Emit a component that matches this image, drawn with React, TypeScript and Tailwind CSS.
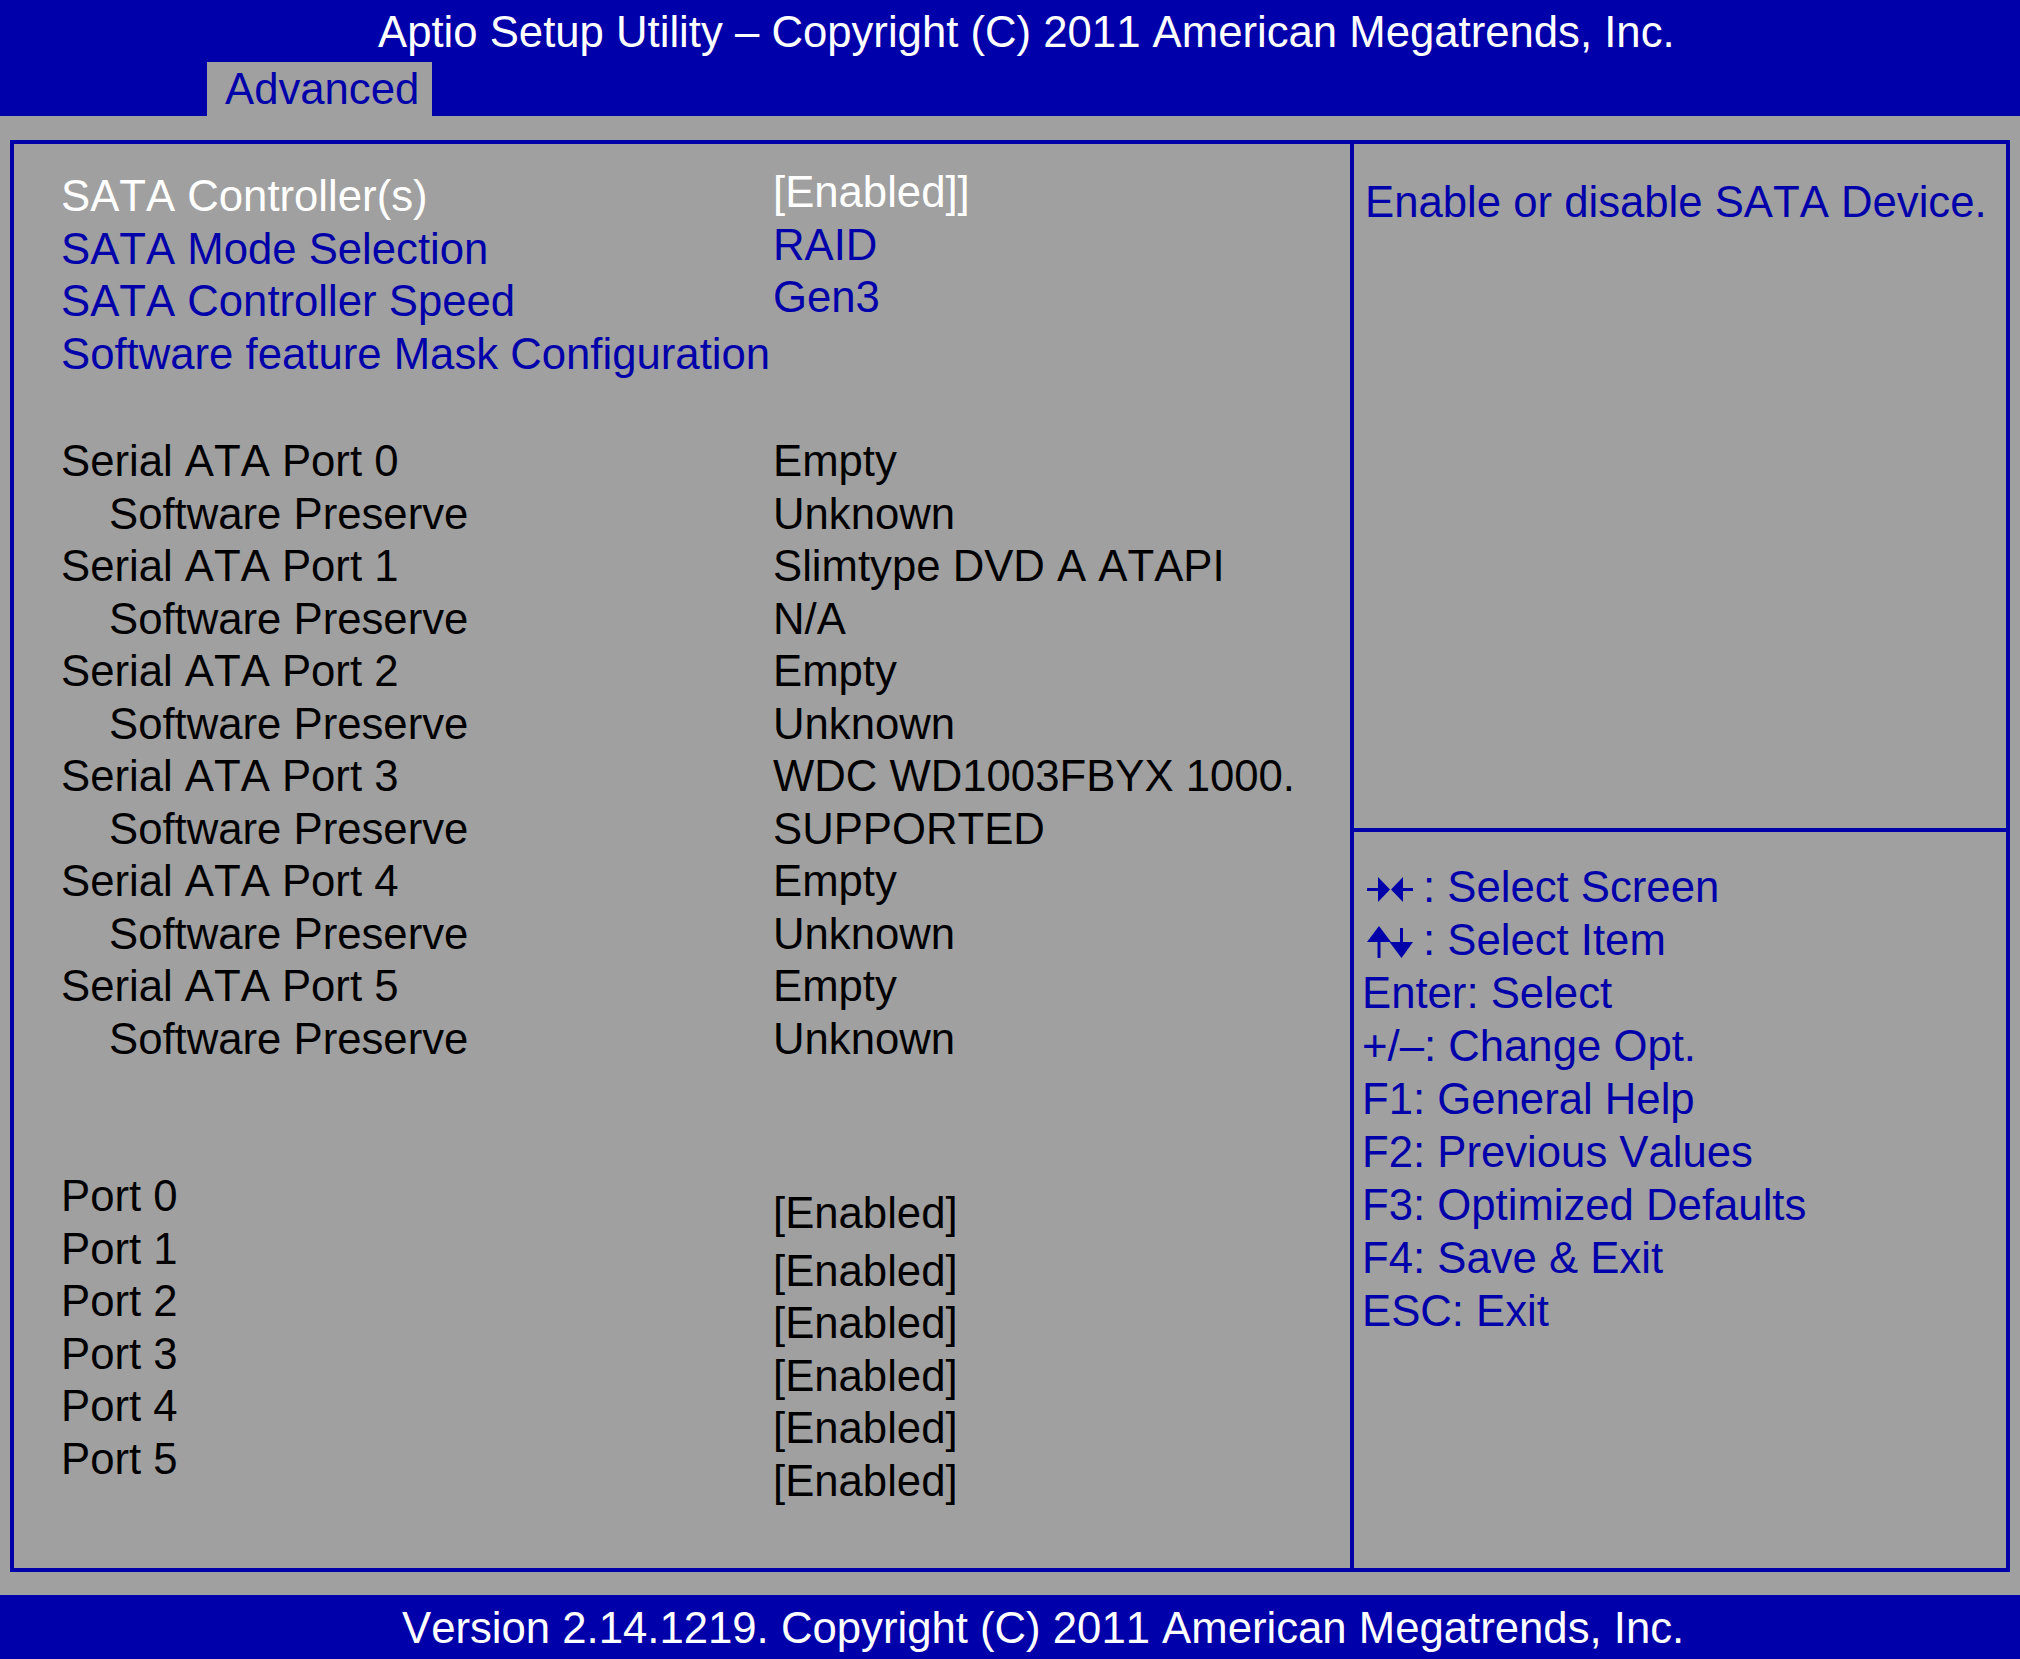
import React from 'react';

const serialRows: { label: string; value: string; sub?: boolean }[] = [
  { label: 'Serial ATA Port 0', value: 'Empty' },
  { label: 'Software Preserve', value: 'Unknown', sub: true },
  { label: 'Serial ATA Port 1', value: 'Slimtype DVD A ATAPI' },
  { label: 'Software Preserve', value: 'N/A', sub: true },
  { label: 'Serial ATA Port 2', value: 'Empty' },
  { label: 'Software Preserve', value: 'Unknown', sub: true },
  { label: 'Serial ATA Port 3', value: 'WDC WD1003FBYX 1000.' },
  { label: 'Software Preserve', value: 'SUPPORTED', sub: true },
  { label: 'Serial ATA Port 4', value: 'Empty' },
  { label: 'Software Preserve', value: 'Unknown', sub: true },
  { label: 'Serial ATA Port 5', value: 'Empty' },
  { label: 'Software Preserve', value: 'Unknown', sub: true },
];

const ports = ['Port 0', 'Port 1', 'Port 2', 'Port 3', 'Port 4', 'Port 5'];

const keyHelp = [
  'Enter: Select',
  '+/\u2013: Change Opt.',
  'F1: General Help',
  'F2: Previous Values',
  'F3: Optimized Defaults',
  'F4: Save & Exit',
  'ESC: Exit',
];

// arrows pointing at each other (left / right)
const ScreenArrows = () => (
  <svg width="46" height="25" viewBox="0 0 46 25" className="inline-block ml-[5px] mr-[10px] align-baseline fill-[#0000aa]">
    <rect x="0" y="11" width="12" height="3" />
    <polygon points="11,0 11,25 23,12.5" />
    <polygon points="24,12.5 36,0 36,25" />
    <rect x="35" y="11" width="11" height="3" />
  </svg>
);

// up / down arrows
const ItemArrows = () => (
  <svg width="46" height="32" viewBox="0 0 46 32" className="inline-block ml-[5px] mr-[10px] align-[-3px] fill-[#0000aa]">
    <polygon points="12,0 0,16 24,16" />
    <rect x="10.5" y="15" width="3" height="17" />
    <rect x="33" y="2" width="3" height="15" />
    <polygon points="22.5,16 46,16 34.5,32" />
  </svg>
);

export default function App() {
  return (
    <div className="w-[2020px] h-[1659px] overflow-hidden bg-[#a0a0a0] font-['Liberation_Sans',Arial,sans-serif] text-[43.7px] leading-[52.5px] whitespace-nowrap [font-kerning:none]">
      {/* title bar */}
      <header className="h-[116px] bg-[#0000aa] pt-[6px]">
        <div className="pl-[378px] leading-[52px] text-white">
          Aptio Setup Utility – Copyright (C) 2011 American Megatrends, Inc.
        </div>
        <div className="mt-[4px] ml-[207px] w-[225px] h-[54px] bg-[#a0a0a0] pl-[18px] leading-[54px] text-[#0000aa]">
          Advanced
        </div>
      </header>

      <main className="h-[1479px] pt-[24px] px-[10px]">
        <div className="h-[1432px] border-4 border-[#0000aa] flex">
          {/* settings list */}
          <section className="w-[1336px] pl-[47px] pt-[26px]">
            <div className="grid grid-cols-[712px_1fr]">
              <div className="flex flex-col text-[#0000aa]">
                <span className="text-white">SATA Controller(s)</span>
                <span>SATA Mode Selection</span>
                <span>SATA Controller Speed</span>
                <span>Software feature Mask Configuration</span>
              </div>
              <div className="flex flex-col -mt-[4px] text-[#0000aa]">
                <span className="text-white">[Enabled]]</span>
                <span>RAID</span>
                <span>Gen3</span>
              </div>
            </div>

            <div className="mt-[55px] grid grid-cols-[712px_1fr] text-black">
              {serialRows.map((r, i) => (
                <React.Fragment key={i}>
                  <span className={r.sub ? 'pl-[48px]' : ''}>{r.label}</span>
                  <span>{r.value}</span>
                </React.Fragment>
              ))}
            </div>

            <div className="mt-[105px] grid grid-cols-[712px_1fr] text-black">
              <div className="flex flex-col">
                {ports.map((p) => (
                  <span key={p}>{p}</span>
                ))}
              </div>
              <div className="flex flex-col pt-[17px]">
                {ports.map((p, i) => (
                  <span key={p} className={i === 0 ? 'mb-[5px]' : ''}>
                    [Enabled]
                  </span>
                ))}
              </div>
            </div>
          </section>

          {/* help panel */}
          <aside className="flex-1 border-l-4 border-[#0000aa] flex flex-col text-[#0000aa]">
            <div className="h-[684px] pl-[11px] pt-[32px]">Enable or disable SATA Device.</div>
            <div className="flex-1 border-t-4 border-[#0000aa] pl-[8px] pt-[28px] leading-[53px]">
              <div>
                <ScreenArrows />: Select Screen
              </div>
              <div>
                <ItemArrows />: Select Item
              </div>
              {keyHelp.map((k) => (
                <div key={k}>{k}</div>
              ))}
            </div>
          </aside>
        </div>
      </main>

      <footer className="h-[64px] bg-[#0000aa] pt-[7px] pl-[402px] text-white">
        Version 2.14.1219. Copyright (C) 2011 American Megatrends, Inc.
      </footer>
    </div>
  );
}
